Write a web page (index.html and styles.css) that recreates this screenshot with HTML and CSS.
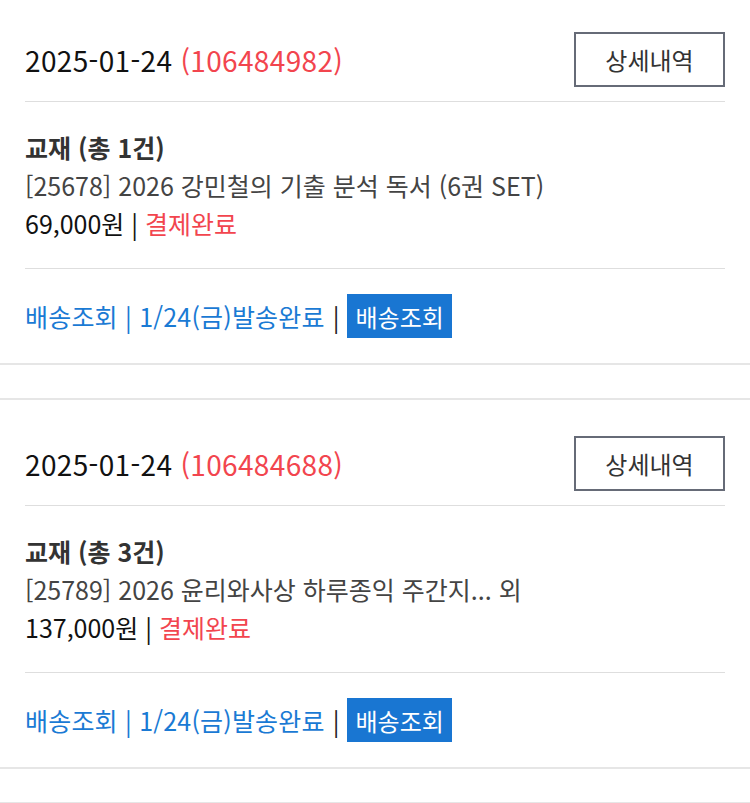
FILE: index.html
```html
<!DOCTYPE html>
<html lang="ko">
<head>
    <meta charset="UTF-8">
    <meta name="viewport" content="width=device-width, initial-scale=1.0">
    <title>주문내역</title>
    <link rel="stylesheet" href="styles.css">
</head>
<body>
    <div class="order-list">
        <div class="order">
            <div class="order-head">
                <div class="order-date">2025-01-24 <span class="order-no">(106484982)</span></div>
                <button class="detail-btn">상세내역</button>
            </div>
            <div class="order-body">
                <div class="item-title">교재 (총 1건)</div>
                <div class="item-name">[25678] 2026 강민철의 기출 분석 독서 (6권 SET)</div>
                <div class="item-price">69,000원 | <span class="paid">결제완료</span></div>
            </div>
            <div class="order-delivery">
                <span class="ship-text">배송조회 | 1/24(금)발송완료</span>
                <span class="bar">|</span>
                <button class="track-btn">배송조회</button>
            </div>
        </div>
        <div class="order">
            <div class="order-head">
                <div class="order-date">2025-01-24 <span class="order-no">(106484688)</span></div>
                <button class="detail-btn">상세내역</button>
            </div>
            <div class="order-body">
                <div class="item-title">교재 (총 3건)</div>
                <div class="item-name">[25789] 2026 윤리와사상 하루종익 주간지... 외</div>
                <div class="item-price">137,000원 | <span class="paid">결제완료</span></div>
            </div>
            <div class="order-delivery">
                <span class="ship-text">배송조회 | 1/24(금)발송완료</span>
                <span class="bar">|</span>
                <button class="track-btn">배송조회</button>
            </div>
        </div>
        <div class="order"></div>
    </div>
</body>
</html>
```

FILE: styles.css
```css
body {
    margin: 0;
    font-family: "Noto Sans CJK KR", "Noto Sans", sans-serif;
    background: #fff;
    color: #111;
}

.order-list {
    margin-top: -6px;
}

.order {
    border-top: 2px solid #e6e6e6;
    border-bottom: 2px solid #e6e6e6;
    margin-bottom: 33px;
    padding: 0 25px;
}

.order-head {
    display: flex;
    justify-content: space-between;
    align-items: center;
    padding: 36px 0 14px;
    border-bottom: 1px solid #dedede;
}

.order-date {
    font-size: 28px;
    letter-spacing: 0.35px;
    color: #111;
}

.order-no {
    color: #f2454e;
}

.detail-btn {
    width: 151px;
    height: 55px;
    background: #fff;
    border: 2px solid #666b77;
    font-family: inherit;
    font-size: 24px;
    color: #333;
    cursor: pointer;
}

.order-body {
    padding: 26px 0;
    border-bottom: 1px solid #dedede;
    font-size: 25px;
    line-height: 38px;
}

.item-title {
    font-weight: bold;
    color: #333;
}

.item-name {
    color: #444;
}

.item-price {
    color: #111;
}

.paid {
    color: #f2454e;
}

.order-delivery {
    display: flex;
    align-items: center;
    padding: 25px 0;
    font-size: 25px;
}

.ship-text {
    color: #1a7ad4;
    letter-spacing: 0.2px;
}

.bar {
    color: #222;
    margin: 0 8px;
}

.track-btn {
    height: 44px;
    padding: 0 8px;
    background: #1976d2;
    border: none;
    color: #fff;
    font-family: inherit;
    font-size: 24px;
    cursor: pointer;
}
```
